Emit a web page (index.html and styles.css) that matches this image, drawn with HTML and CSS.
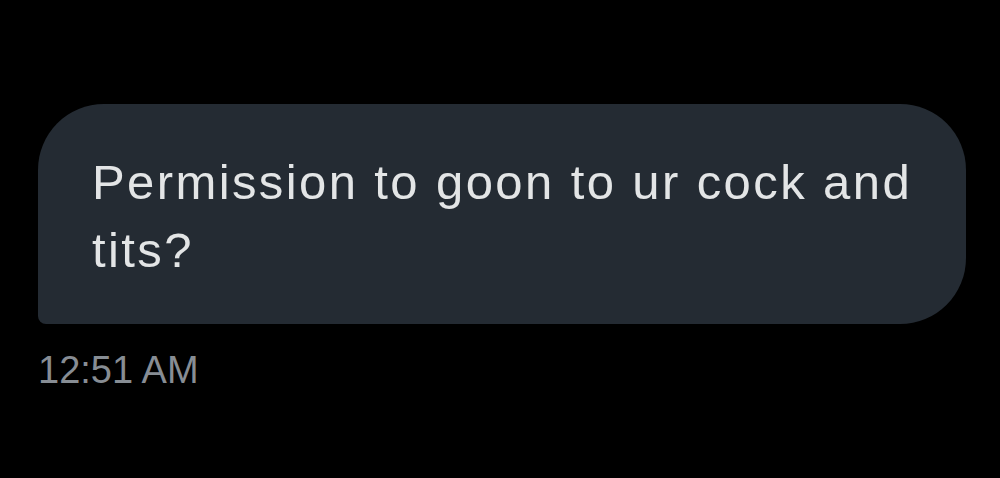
FILE: index.html
```html
<!DOCTYPE html>
<html lang="en">
<head>
<meta charset="utf-8">
<link rel="stylesheet" href="styles.css">
<title>Messages</title>
</head>
<body>
  <main class="thread">
    <div class="message">
      <div class="bubble">
        <p class="bubble-text">Permission to goon to ur cock and tits?</p>
      </div>
      <div class="timestamp">12:51 AM</div>
    </div>
  </main>
</body>
</html>
```
FILE: styles.css
```css
html, body {
  margin: 0;
  background: #000;
  height: 100%;
}

.thread {
  padding: 104px 34px 0 38px;
}

.message {
  display: flex;
  flex-direction: column;
  gap: 24px;
}

.bubble {
  width: 928px;
  height: 220px;
  box-sizing: border-box;
  background: #242b33;
  border-radius: 66px 66px 66px 8px;
  padding: 44px 40px 0 54px;
}

.bubble-text {
  margin: 0;
  font-family: "Liberation Sans", Arial, sans-serif;
  font-size: 49px;
  line-height: 68px;
  letter-spacing: 2.4px;
  color: #e3e5e6;
}

.timestamp {
  font-family: "Liberation Sans", Arial, sans-serif;
  font-size: 38px;
  line-height: 44px;
  color: #878d94;
}
```
